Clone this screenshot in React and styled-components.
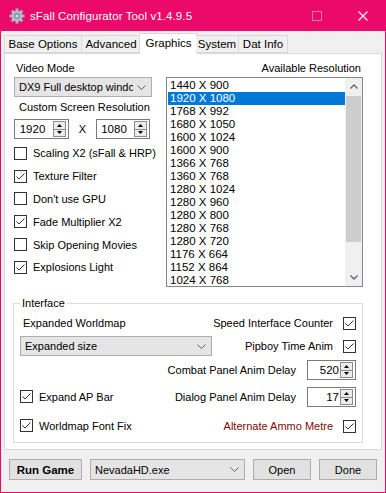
import React from 'react'
import styled, { createGlobalStyle } from 'styled-components'

const RESOLUTIONS = [
    '1440 X 900', '1920 X 1080', '1768 X 992', '1680 X 1050', '1600 X 1024', '1600 X 900',
    '1366 X 768', '1360 X 768', '1280 X 1024', '1280 X 960', '1280 X 800', '1280 X 768',
    '1280 X 720', '1176 X 664', '1152 X 864', '1024 X 768',
]

const TABS = [
    { name: 'Base Options', w: 78 },
    { name: 'Advanced', w: 59 },
    { name: 'Graphics', w: 59, active: true },
    { name: 'System', w: 43 },
    { name: 'Dat Info', w: 49 },
]

const LEFT_CHECKS = [
    { label: 'Scaling X2 (sFall & HRP)', on: false },
    { label: 'Texture Filter', on: true },
    { label: "Don't use GPU", on: false },
    { label: 'Fade Multiplier X2', on: true },
    { label: 'Skip Opening Movies', on: false },
    { label: 'Explosions Light', on: true },
]

const Chevron = () => (
    <svg width="9" height="5" viewBox="0 0 9 5">
        <polyline points="0.5,0.5 4.5,4.5 8.5,0.5" fill="none" stroke="#606060" strokeWidth="1" />
    </svg>
)

const Check = ({ on }) => (
    <CheckBox>
        {on && <svg width="11" height="11" viewBox="0 0 11 11">
            <polyline points="1.5,5.5 4,8 9.5,2.5" fill="none" stroke="#333" strokeWidth="1" />
        </svg>}
    </CheckBox>
)

const Spin = ({ value, w, align }) => (
    <Spinner $w={w}>
        <SpinValue $align={align}>{value}</SpinValue>
        <SpinButtons>
            <SpinBtn>
                <svg width="5" height="3" viewBox="0 0 5 3"><polygon points="2.5,0 5,3 0,3" fill="#000" /></svg>
            </SpinBtn>
            <SpinBtn>
                <svg width="5" height="3" viewBox="0 0 5 3"><polygon points="0,0 5,0 2.5,3" fill="#000" /></svg>
            </SpinBtn>
        </SpinButtons>
    </Spinner>
)

const Gear = () => {
    const teeth = [0, 45, 90, 135, 180, 225, 270, 315]
    return (
        <svg width="16" height="16" viewBox="0 0 16 16">
            {teeth.map(a => <rect key={a} x="6.5" y="0.5" width="3" height="4" fill="#aab6c2" transform={`rotate(${a} 8 8)`} />)}
            <circle cx="8" cy="8" r="5.2" fill="#b9c4cf" />
            <circle cx="8" cy="8" r="3.2" fill="#8593a2" />
            <circle cx="8" cy="8" r="1.6" fill="#d6dde4" />
        </svg>
    )
}

const App = () => {
    return (
        <>
            <GlobalStyle />
            <Window>
                <TitleBar>
                    <Gear />
                    <Title>sFall Configurator Tool v1.4.9.5</Title>
                    <CaptionBtn>
                        <MaxBox />
                    </CaptionBtn>
                    <CaptionBtn>
                        <svg width="10" height="10" viewBox="0 0 10 10">
                            <path d="M0.5 0.5 L9.5 9.5 M9.5 0.5 L0.5 9.5" stroke="#fff" strokeWidth="1.1" />
                        </svg>
                    </CaptionBtn>
                </TitleBar>
                <Client>
                    <TabStrip>
                        {TABS.map(t => <Tab key={t.name} $w={t.w} $active={t.active}>{t.name}</Tab>)}
                    </TabStrip>
                    <Page>
                        <TopGrid>
                            <Column>
                                <FieldLabel $indent={2}>Video Mode</FieldLabel>
                                <Combo $w={138}>
                                    <ComboText>DX9 Full desktop window</ComboText>
                                    <Chevron />
                                </Combo>
                                <FieldLabel $indent={5} $h={20}>Custom Screen Resolution</FieldLabel>
                                <SpinRow>
                                    <Spin value="1920" w={55} align="center" />
                                    <Times>X</Times>
                                    <Spin value="1080" w={54} align="center" />
                                </SpinRow>
                                <CheckList>
                                    {LEFT_CHECKS.map(c => (
                                        <CheckRow key={c.label}>
                                            <Check on={c.on} />
                                            <span>{c.label}</span>
                                        </CheckRow>
                                    ))}
                                </CheckList>
                            </Column>
                            <Column>
                                <FieldLabel $right>Available Resolution</FieldLabel>
                                <ListBox>
                                    <Items>
                                        {RESOLUTIONS.map(r => <Item key={r} $selected={r === '1920 X 1080'}>{r}</Item>)}
                                    </Items>
                                    <ScrollBar>
                                        <ScrollArrow>
                                            <svg width="8" height="5" viewBox="0 0 8 5"><polyline points="0.5,4.5 4,1 7.5,4.5" fill="none" stroke="#606060" strokeWidth="1.3" /></svg>
                                        </ScrollArrow>
                                        <Track><Thumb /></Track>
                                        <ScrollArrow>
                                            <svg width="8" height="5" viewBox="0 0 8 5"><polyline points="0.5,0.5 4,4 7.5,0.5" fill="none" stroke="#606060" strokeWidth="1.3" /></svg>
                                        </ScrollArrow>
                                    </ScrollBar>
                                </ListBox>
                            </Column>
                        </TopGrid>
                        <Group>
                            <Legend>Interface</Legend>
                            <GroupRow $h={26}>
                                <Cell><FieldLabel $indent={3}>Expanded Worldmap</FieldLabel></Cell>
                                <Cell $right>Speed Interface Counter<Check on /></Cell>
                            </GroupRow>
                            <GroupRow $h={20}>
                                <Combo $w={192}>
                                    <ComboText>Expanded size</ComboText>
                                    <Chevron />
                                </Combo>
                                <Cell $right>Pipboy Time Anim<Check on /></Cell>
                            </GroupRow>
                            <GroupRow $h={28}>
                                <Cell $right $spin>Combat Panel Anim Delay<Spin value="520" w={49} align="right" /></Cell>
                            </GroupRow>
                            <GroupRow $h={26}>
                                <Cell><CheckRow as="div"><Check on /><span>Expand AP Bar</span></CheckRow></Cell>
                                <Cell $right $spin>Dialog Panel Anim Delay<Spin value="17" w={49} align="right" /></Cell>
                            </GroupRow>
                            <GroupRow $h={32}>
                                <Cell><CheckRow as="div"><Check on /><span>Worldmap Font Fix</span></CheckRow></Cell>
                                <Cell $right $warn>Alternate Ammo Metre<Check on /></Cell>
                            </GroupRow>
                        </Group>
                    </Page>
                    <BottomBar>
                        <Button $w={73} $bold>Run Game</Button>
                        <Combo $w={155} $h={21}>
                            <ComboText>NevadaHD.exe</ComboText>
                            <Chevron />
                        </Combo>
                        <Button $w={58}>Open</Button>
                        <Button $w={58}>Done</Button>
                    </BottomBar>
                </Client>
            </Window>
        </>
    )
}

export default App

const GlobalStyle = createGlobalStyle`
    html, body{
        margin:0;
        padding:0;
        background:#fff;
    }
    body{
        font-family:"Liberation Sans", Arial, sans-serif;
        font-size:11px;
        color:#000;
    }
`

const Window = styled.div`
    width:386px;
    height:493px;
    box-sizing:border-box;
    background:#eb0a6a;
    padding:0 1px 1px 1px;
    display:flex;
    flex-direction:column;
`

const TitleBar = styled.div`
    height:31px;
    margin:0 -1px;
    display:flex;
    align-items:center;
    padding-left:9px;
    color:#fff;
    svg{ flex:none; }
`

const Title = styled.div`
    flex:1;
    margin-left:5px;
    font-size:11.5px;
    letter-spacing:0.1px;
`

const CaptionBtn = styled.div`
    width:46px;
    height:31px;
    display:flex;
    align-items:center;
    justify-content:center;
`

const MaxBox = styled.div`
    width:8px;
    height:8px;
    border:1px solid #f575a8;
`

const Client = styled.div`
    flex:1;
    background:#f0f0f0;
    display:flex;
    flex-direction:column;
    padding-top:2px;
`

const TabStrip = styled.div`
    height:20px;
    display:flex;
    align-items:flex-end;
    padding-left:3px;
    position:relative;
    z-index:1;
`

const Tab = styled.div`
    width:${p => p.$w}px;
    height:${p => p.$active ? 21 : 18}px;
    margin:${p => p.$active ? '0 -2px -1px -2px' : '0'};
    box-sizing:border-box;
    border:1px solid #d9d9d9;
    border-bottom:${p => p.$active ? 'none' : '1px solid #d9d9d9'};
    border-left-width:${p => p.$active ? 1 : 0}px;
    background:${p => p.$active ? '#fff' : '#f0f0f0'};
    display:flex;
    align-items:center;
    justify-content:center;
    padding-bottom:${p => p.$active ? 3 : 0}px;
    white-space:nowrap;
    font-size:11.5px;
    &:first-child{ border-left-width:1px; }
`

const Page = styled.div`
    margin-left:3px;
    width:378px;
    height:397px;
    box-sizing:border-box;
    background:#fff;
    border:1px solid #d9d9d9;
    padding:5px 18px 0 9px;
    display:flex;
    flex-direction:column;
`

const TopGrid = styled.div`
    display:grid;
    grid-template-columns:138px 1fr;
    column-gap:14px;
`

const Column = styled.div`
    display:flex;
    flex-direction:column;
`

const FieldLabel = styled.div`
    height:${p => p.$h || 18}px;
    line-height:${p => p.$h || 18}px;
    padding-left:${p => p.$indent || 0}px;
    padding-right:${p => p.$right ? 2 : 0}px;
    text-align:${p => p.$right ? 'right' : 'left'};
    white-space:nowrap;
`

const Combo = styled.div`
    width:${p => p.$w}px;
    height:${p => p.$h || 20}px;
    box-sizing:border-box;
    background:#e5e5e5;
    border:1px solid #adadad;
    display:flex;
    align-items:center;
    padding:0 5px 0 4px;
    gap:4px;
    flex:none;
    svg{ flex:none; }
`

const ComboText = styled.div`
    flex:1;
    overflow:hidden;
    white-space:nowrap;
`

const SpinRow = styled.div`
    display:flex;
    align-items:center;
    margin-top:2px;
`

const Times = styled.div`
    width:27px;
    text-align:center;
`

const Spinner = styled.div`
    width:${p => p.$w}px;
    height:20px;
    box-sizing:border-box;
    border:1px solid #7a7a7a;
    background:#fff;
    display:flex;
    align-items:stretch;
    padding:1px 2px 1px 1px;
    flex:none;
`

const SpinValue = styled.div`
    flex:1;
    display:flex;
    align-items:center;
    justify-content:${p => p.$align === 'right' ? 'flex-end' : 'center'};
    padding-right:${p => p.$align === 'right' ? 1 : 4}px;
    font-size:11.5px;
`

const SpinButtons = styled.div`
    width:13px;
    flex:none;
    display:flex;
    flex-direction:column;
`

const SpinBtn = styled.div`
    flex:1;
    background:#ececec;
    border:1px solid #8c8c8c;
    display:flex;
    align-items:center;
    justify-content:center;
    & + &{ border-top:none; }
`

const CheckList = styled.div`
    display:flex;
    flex-direction:column;
    margin-top:3px;
`

const CheckRow = styled.label`
    height:22.8px;
    display:flex;
    align-items:center;
    gap:6px;
    white-space:nowrap;
`

const CheckBox = styled.div`
    width:13px;
    height:13px;
    box-sizing:border-box;
    border:1px solid #333;
    background:#fff;
    flex:none;
    display:flex;
    align-items:center;
    justify-content:center;
`

const ListBox = styled.div`
    height:210px;
    box-sizing:border-box;
    border:1px solid #828790;
    display:flex;
`

const Items = styled.div`
    flex:1;
    padding:1px 0 0 1px;
`

const Item = styled.div`
    height:13px;
    line-height:13px;
    padding-left:2px;
    background:${p => p.$selected ? '#0078d7' : 'transparent'};
    color:${p => p.$selected ? '#fff' : '#000'};
    font-size:11.5px;
`

const ScrollBar = styled.div`
    width:17px;
    background:#f0f0f0;
    display:flex;
    flex-direction:column;
`

const ScrollArrow = styled.div`
    height:17px;
    display:flex;
    align-items:center;
    justify-content:center;
`

const Track = styled.div`
    flex:1;
    padding:1px 1px 0 1px;
`

const Thumb = styled.div`
    height:146px;
    background:#cdcdcd;
`

const Group = styled.fieldset`
    margin:9px 0 0 -1px;
    padding:0 6px 0 6px;
    border:1px solid #dcdcdc;
    min-width:0;
    display:flex;
    flex-direction:column;
`

const Legend = styled.legend`
    padding:0 2px;
    margin-left:0;
    line-height:14px;
`

const GroupRow = styled.div`
    height:${p => p.$h}px;
    display:flex;
    align-items:center;
    justify-content:space-between;
`

const Cell = styled.div`
    display:flex;
    align-items:center;
    margin-left:${p => p.$right ? 'auto' : '0'};
    gap:${p => p.$spin ? 11 : 10}px;
    color:${p => p.$warn ? '#7f0a0a' : '#000'};
    white-space:nowrap;
    ${FieldLabel}{ height:auto; line-height:14px; }
`

const BottomBar = styled.div`
    display:flex;
    align-items:center;
    gap:8px;
    padding:9px 0 0 8px;
`

const Button = styled.div`
    width:${p => p.$w}px;
    height:21px;
    box-sizing:border-box;
    background:#e1e1e1;
    border:1px solid #adadad;
    display:flex;
    align-items:center;
    justify-content:center;
    font-weight:${p => p.$bold ? 700 : 400};
    font-size:${p => p.$bold ? 11.5 : 11}px;
`
